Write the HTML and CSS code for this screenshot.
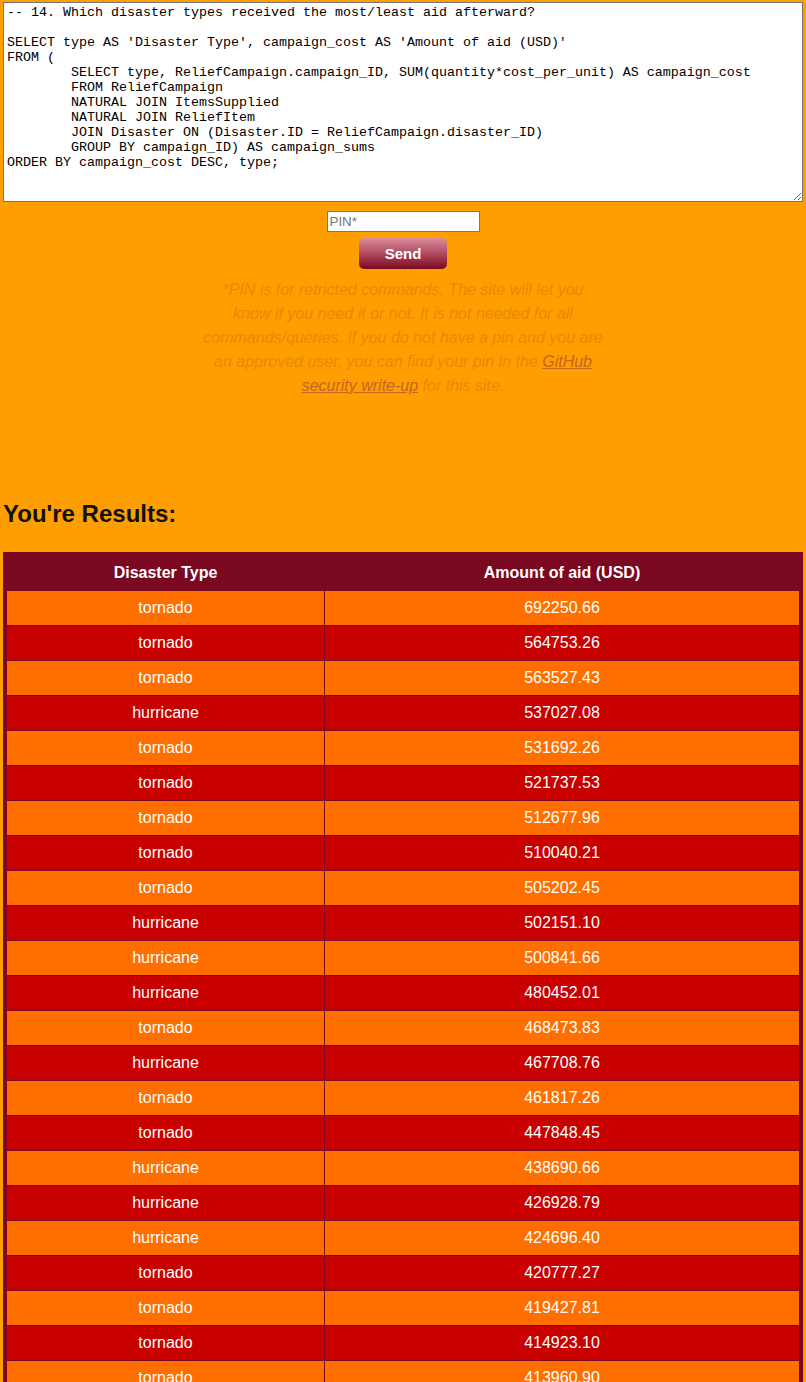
FILE: index.html
```html
<!DOCTYPE html>
<html>
<head>
<meta charset="utf-8">
<title>Query</title>
<link rel="stylesheet" href="styles.css">
</head>
<body>
<div class="page">
<form class="query-form">
<textarea class="query" spellcheck="false">-- 14. Which disaster types received the most/least aid afterward?

SELECT type AS 'Disaster Type', campaign_cost AS 'Amount of aid (USD)'
FROM (
	SELECT type, ReliefCampaign.campaign_ID, SUM(quantity*cost_per_unit) AS campaign_cost
	FROM ReliefCampaign
	NATURAL JOIN ItemsSupplied
	NATURAL JOIN ReliefItem
	JOIN Disaster ON (Disaster.ID = ReliefCampaign.disaster_ID)
	GROUP BY campaign_ID) AS campaign_sums
ORDER BY campaign_cost DESC, type;</textarea>
<div class="controls">
<input class="pin" type="text" placeholder="PIN*">
<button class="send" type="button">Send</button>
<p class="note">*PIN is for retricted commands. The site will let you know if you need it or not. It is not needed for all commands/queries. If you do not have a pin and you are an approved user, you can find your pin in the <a href="#">GitHub security write-up</a> for this site.</p>
</div>
</form>
<h2 class="results-title">You're Results:</h2>
<table class="results">
<thead>
<tr><th class="col-type">Disaster Type</th><th>Amount of aid (USD)</th></tr>
</thead>
<tbody>
<tr><td>tornado</td><td>692250.66</td></tr>
<tr><td>tornado</td><td>564753.26</td></tr>
<tr><td>tornado</td><td>563527.43</td></tr>
<tr><td>hurricane</td><td>537027.08</td></tr>
<tr><td>tornado</td><td>531692.26</td></tr>
<tr><td>tornado</td><td>521737.53</td></tr>
<tr><td>tornado</td><td>512677.96</td></tr>
<tr><td>tornado</td><td>510040.21</td></tr>
<tr><td>tornado</td><td>505202.45</td></tr>
<tr><td>hurricane</td><td>502151.10</td></tr>
<tr><td>hurricane</td><td>500841.66</td></tr>
<tr><td>hurricane</td><td>480452.01</td></tr>
<tr><td>tornado</td><td>468473.83</td></tr>
<tr><td>hurricane</td><td>467708.76</td></tr>
<tr><td>tornado</td><td>461817.26</td></tr>
<tr><td>tornado</td><td>447848.45</td></tr>
<tr><td>hurricane</td><td>438690.66</td></tr>
<tr><td>hurricane</td><td>426928.79</td></tr>
<tr><td>hurricane</td><td>424696.40</td></tr>
<tr><td>tornado</td><td>420777.27</td></tr>
<tr><td>tornado</td><td>419427.81</td></tr>
<tr><td>tornado</td><td>414923.10</td></tr>
<tr><td>tornado</td><td>413960.90</td></tr>
<tr><td>hurricane</td><td>410318.52</td></tr>
<tr><td>tornado</td><td>402775.14</td></tr>
</tbody>
</table>
</div>
</body>
</html>
```

FILE: styles.css
```css
html, body {
  margin: 0;
  padding: 0;
  background: #ff9e00;
}

body {
  font-family: "Liberation Sans", Arial, sans-serif;
}

.page {
  padding: 2px 3px 20px 3px;
}

.query-form {
  margin: 0;
}

.query {
  display: block;
  box-sizing: border-box;
  width: 800px;
  height: 200px;
  margin: 0;
  padding: 2px 3px;
  border: 1px solid #767676;
  background: #fff;
  color: #000;
  font-family: "Liberation Mono", "Courier New", monospace;
  font-size: 13.333px;
  line-height: 15px;
  tab-size: 8;
  resize: both;
  outline: none;
}

.controls {
  display: flex;
  flex-direction: column;
  align-items: center;
}

.pin {
  box-sizing: border-box;
  width: 153px;
  height: 21px;
  margin: 9px 0 0 0;
  padding: 1px 2px;
  border: 1px solid #767676;
  background: #fff;
  font-family: "Liberation Sans", Arial, sans-serif;
  font-size: 13.333px;
  color: #000;
}

.pin::placeholder {
  color: #757575;
}

.send {
  box-sizing: border-box;
  width: 88px;
  height: 31px;
  margin: 6px 0 0 0;
  padding: 0;
  border: none;
  border-radius: 5px;
  background: linear-gradient(to bottom, #db8e9b 0%, #b04a60 50%, #7a0820 100%);
  color: #fff;
  font-family: "Liberation Sans", Arial, sans-serif;
  font-weight: bold;
  font-size: 15px;
}

.note {
  width: 401px;
  margin: 9px 0 0 0;
  text-align: center;
  font-style: italic;
  font-size: 16px;
  line-height: 24px;
  color: #e58b00;
}

.note a {
  color: #c4661e;
  text-decoration: underline;
}

.results-title {
  margin: 102px 0 24px 0;
  font-size: 24px;
  line-height: 28px;
  font-weight: bold;
  color: #111;
}

.results {
  width: 800px;
  border-collapse: collapse;
  border: 4px solid #7a0820;
  color: #fff;
  font-size: 16px;
}

.results th {
  height: 34px;
  padding: 0;
  background: #7a0820;
  font-weight: bold;
  text-align: center;
  border: 1px solid #7a0820;
}

.results .col-type {
  width: 317px;
}

.results td {
  height: 34px;
  padding: 0 8px;
  text-align: center;
  border: 1px solid #7a0820;
  line-height: 18px;
}

.results tbody tr:nth-child(odd) td {
  background: #ff6f00;
}

.results tbody tr:nth-child(even) td {
  background: #c80000;
}
```
